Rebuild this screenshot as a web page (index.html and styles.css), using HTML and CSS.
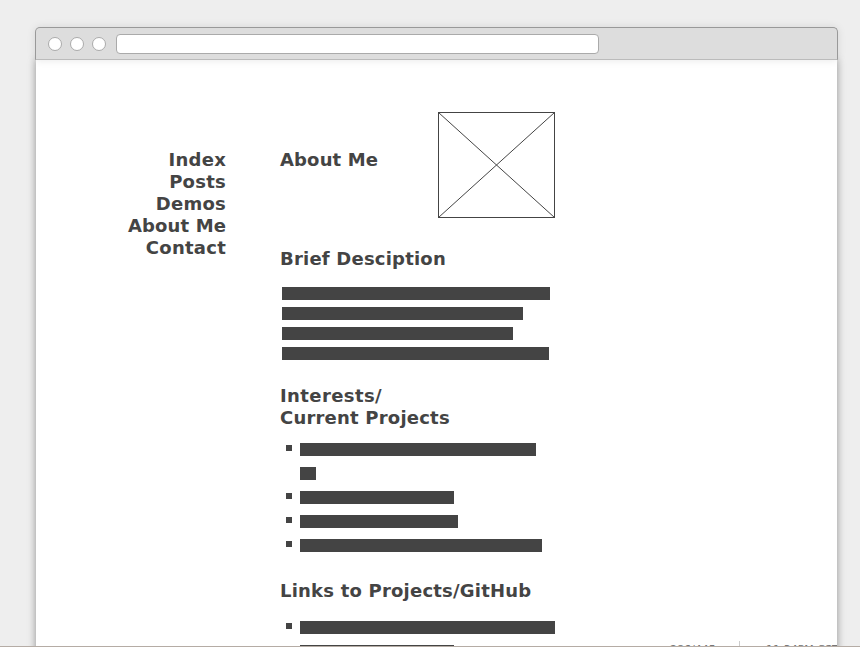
FILE: index.html
```html
<!DOCTYPE html>
<html lang="en">
<head>
<meta charset="utf-8">
<title>About Me</title>
<link rel="stylesheet" href="styles.css">
</head>
<body>
<div class="browser">
  <header class="toolbar">
    <i class="dot"></i><i class="dot"></i><i class="dot"></i>
    <div class="address"></div>
  </header>
  <div class="page">
    <nav class="nav">
      <a>Index</a>
      <a>Posts</a>
      <a>Demos</a>
      <a class="tight">About Me</a>
      <a>Contact</a>
    </nav>
    <main class="content">
      <div class="intro">
        <h1>About Me</h1>
        <svg class="photo" width="117" height="106" viewBox="0 0 117 106" fill="none" stroke="#444">
          <rect x=".5" y=".5" width="116" height="105"/>
          <path d="M.5 .5L116.5 105.5M116.5 .5L.5 105.5"/>
        </svg>
      </div>
      <h2>Brief Desciption</h2>
      <div class="lines">
        <i class="bar" style="width:268px"></i>
        <i class="bar" style="width:241px"></i>
        <i class="bar" style="width:231px"></i>
        <i class="bar" style="width:267px"></i>
      </div>
      <h2><span class="wide">Interests/</span><br>Current Projects</h2>
      <ul class="list">
        <li><i class="bar" style="width:236px"></i><i class="bar" style="width:16px"></i></li>
        <li><i class="bar" style="width:154px"></i></li>
        <li><i class="bar" style="width:158px"></i></li>
        <li><i class="bar" style="width:242px"></i></li>
      </ul>
      <h2>Links to Projects/GitHub</h2>
      <ul class="list links">
        <li><i class="bar" style="width:255px"></i><i class="bar" style="width:154px"></i></li>
      </ul>
    </main>
  </div>
</div>
<footer class="status"><span class="count">286/445</span><i class="divider"></i><span class="clock">11:34PM CST</span></footer>
</body>
</html>
```
FILE: styles.css
```css
* { box-sizing: border-box; }
body {
  display: flow-root;
  position: relative;
  height: 647px;
  margin: 0;
  overflow: hidden;
  background: #eee;
  color: #444;
  font: bold 18px/22px "DejaVu Sans", sans-serif;
}
.browser {
  width: 803px;
  height: 620px;
  margin: 27px 0 0 35px;
}
.toolbar {
  position: relative;
  height: 33px;
  display: flex;
  align-items: center;
  gap: 8px;
  padding: 0 12px;
  background: #ddd;
  border: 1px solid #999;
  border-bottom-color: #bbb;
  border-radius: 5px 5px 0 0;
  box-shadow: 0 0 8px rgba(0, 0, 0, .1);
}
.dot {
  width: 14px;
  height: 14px;
  border: 1px solid #aaa;
  border-radius: 50%;
  background: #fff;
}
.address {
  width: 483px;
  height: 20px;
  margin-left: 2px;
  border: 1px solid #aaa;
  border-radius: 4px;
  background: #fff;
}
.page {
  height: 600px;
  margin: 0 1px;
  padding-top: 52px;
  display: flex;
  overflow: hidden;
  background: #fff;
  box-shadow: 0 0 8px rgba(0, 0, 0, .4);
}
.nav {
  width: 190px;
  margin: 37px 54px 0 0;
  display: flex;
  flex-direction: column;
  text-align: right;
  letter-spacing: .25px;
}
.tight { letter-spacing: .12px; }
.content { width: 275px; }
h1, h2 { margin: 0; font: inherit; letter-spacing: .21px; }
.intro {
  display: flex;
  justify-content: space-between;
  margin-bottom: 30px;
}
.intro h1 { margin-top: 37px; letter-spacing: .15px; }
.wide { letter-spacing: .4px; }
.photo { display: block; }
.bar { display: block; height: 13px; background: #444; }
.lines {
  display: flex;
  flex-direction: column;
  gap: 7px;
  margin: 17px 0 25px 2px;
}
.list {
  list-style: none;
  margin: 14px 0 28px;
  padding: 0 0 0 20px;
  display: flex;
  flex-direction: column;
  gap: 11px;
}
.list.links { margin-top: 19px; }
.list li {
  position: relative;
  display: flex;
  flex-direction: column;
  gap: 11px;
}
.list li::before {
  content: "";
  position: absolute;
  left: -14px;
  top: 2px;
  width: 6px;
  height: 6px;
  background: #444;
}
.status {
  position: absolute;
  left: 0;
  right: 0;
  bottom: 0;
  height: 6px;
  padding-left: 670px;
  display: flex;
  overflow: hidden;
  border-bottom: 1px solid #b5aca5;
  color: #777;
  font: 11px/14px "DejaVu Sans", sans-serif;
  white-space: nowrap;
}
.status span { margin-top: 2px; }
.count { width: 69px; }
.divider { width: 1px; margin-right: 26px; background: #ccc; }
.clock { width: 71px; overflow: hidden; }
```
